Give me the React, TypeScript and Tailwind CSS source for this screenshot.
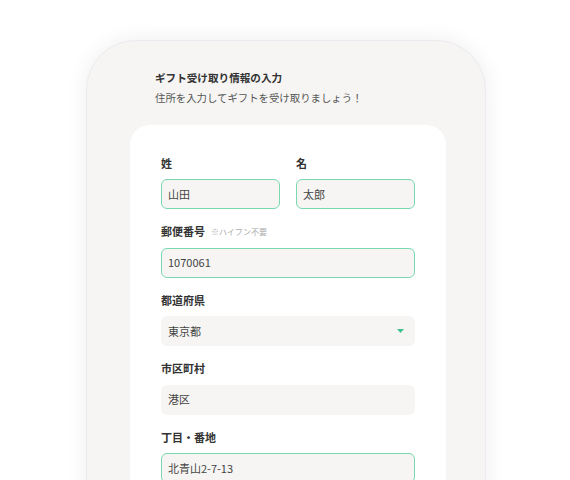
const font = { fontFamily: '"Noto Sans CJK JP", "Noto Sans", sans-serif' }

function Field({
  label,
  note,
  value,
  active = false,
  select = false,
}: {
  label: string
  note?: string
  value: string
  active?: boolean
  select?: boolean
}) {
  return (
    <div className="flex flex-col">
      <div className="flex items-center gap-[6px] h-4 mb-2">
        <span className="text-[11px] font-bold text-[#333]">{label}</span>
        {note && <span className="text-[8px] text-[#aaa]">{note}</span>}
      </div>
      <div
        className={`h-[30px] rounded-[6px] bg-[#f6f5f3] border flex items-center justify-between pl-[6px] pr-[10px] ${
          active ? "border-[#7ad8b0]" : "border-transparent"
        }`}
      >
        <span className="text-[11px] text-[#444]">{value}</span>
        {select && (
          <svg width="7" height="4" viewBox="0 0 7 4">
            <path d="M0 0h7L3.5 4z" fill="#3ec18c" />
          </svg>
        )}
      </div>
    </div>
  )
}

export default function App() {
  return (
    <div className="h-[480px] overflow-hidden bg-white pl-[2px]" style={font}>
      <div className="mx-auto mt-[40px] w-[400px] h-[600px] rounded-t-[50px] bg-[#f6f5f3] border border-[#ececf0] shadow-[0_0_22px_rgba(0,0,0,0.07)] px-[43px] pt-[29px]">
        <div className="pl-[25px]">
          <div className="text-[10.6px] leading-4 font-bold text-[#333]">ギフト受け取り情報の入力</div>
          <div className="mt-1 text-[10.4px] leading-4 text-[#555]">住所を入力してギフトを受け取りましょう！</div>
        </div>
        <div className="mt-[19px] w-[316px] bg-white rounded-[20px] px-[31px] pt-[30px] pb-8 flex flex-col gap-[14.5px]">
          <div className="grid grid-cols-2 gap-4">
            <Field label="姓" value="山田" active />
            <Field label="名" value="太郎" active />
          </div>
          <Field label="郵便番号" note="※ハイフン不要" value="1070061" active />
          <Field label="都道府県" value="東京都" select />
          <Field label="市区町村" value="港区" />
          <Field label="丁目・番地" value="北青山2-7-13" active />
        </div>
      </div>
    </div>
  )
}
